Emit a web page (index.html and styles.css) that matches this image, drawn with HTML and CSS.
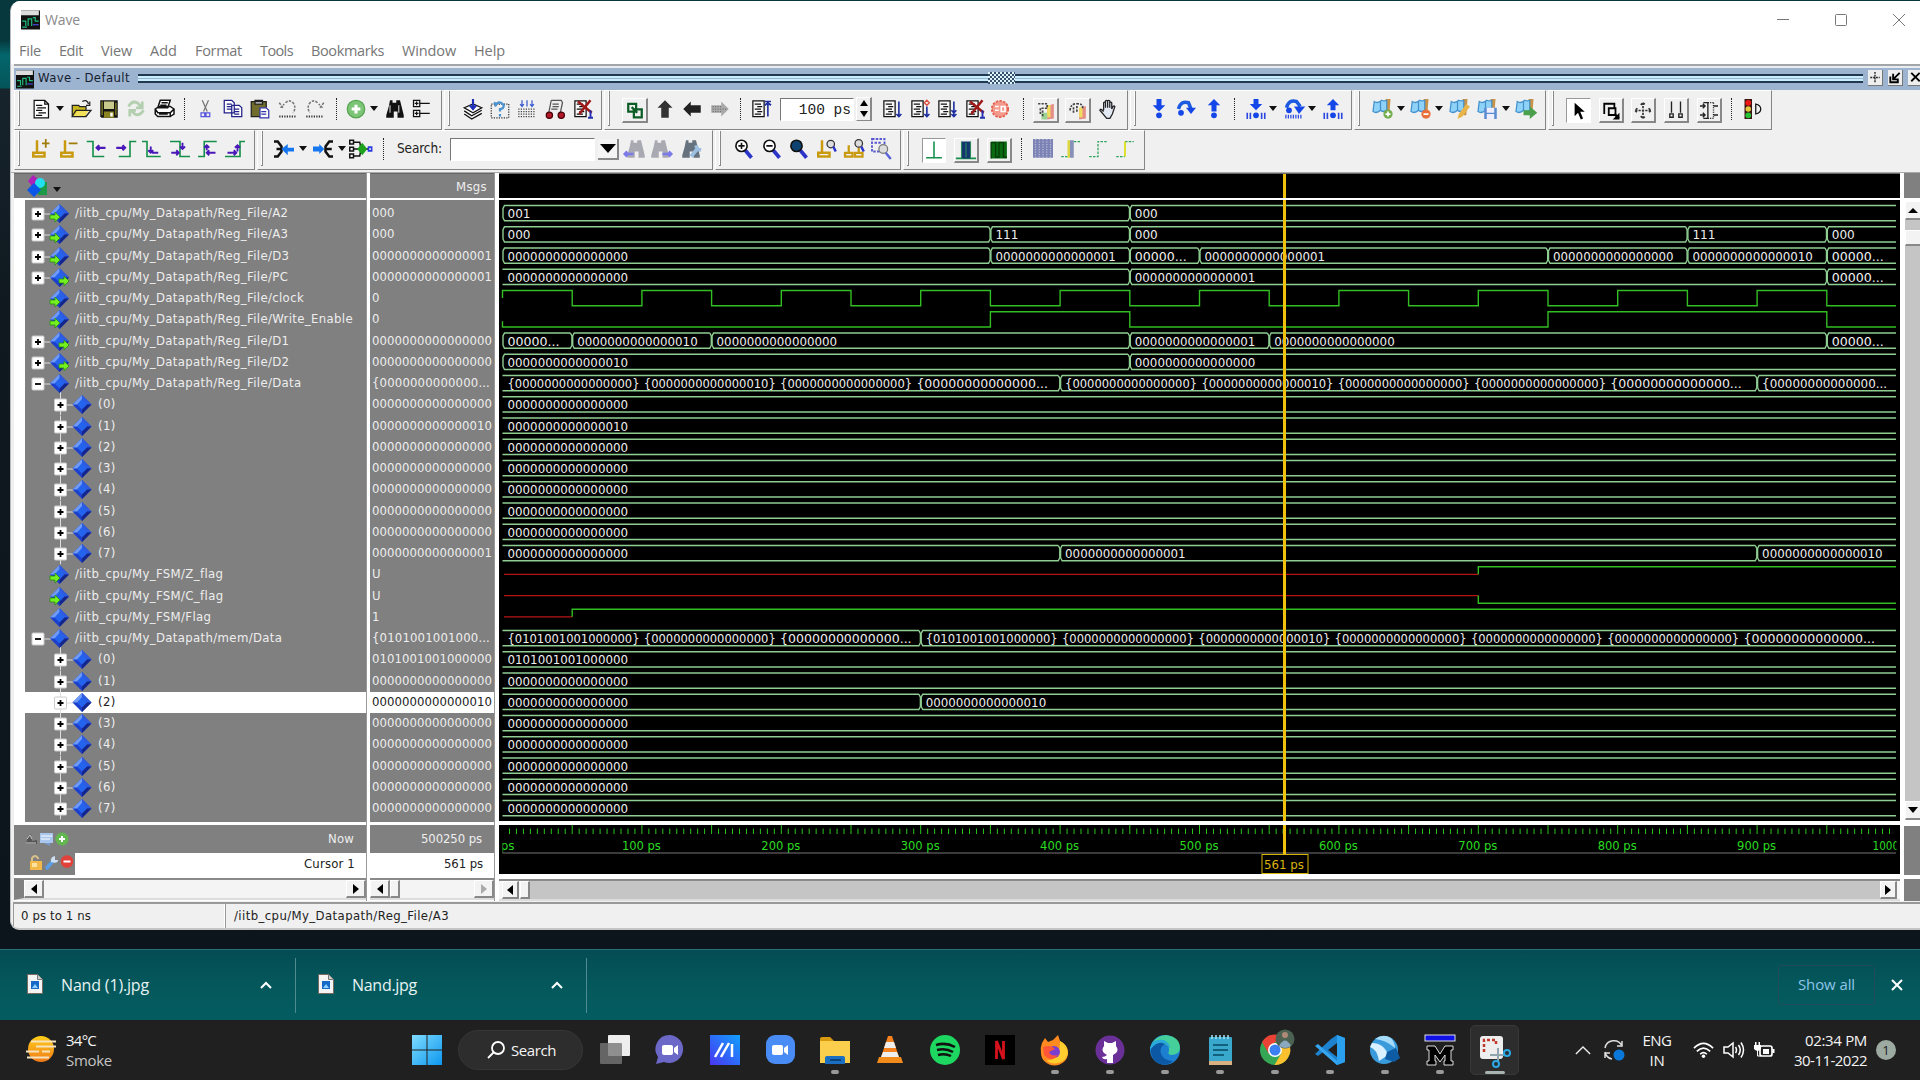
FILE: index.html
```html
<!DOCTYPE html>
<html lang="en">
<head>
<meta charset="utf-8">
<title>Wave</title>
<link rel="stylesheet" href="styles.css">
</head>
<body>
<div class="desktop">
  <section class="window">
    <header class="titlebar">
      <svg class="app-icon" viewBox="0 0 16 16"><rect width="16" height="16" fill="#111"/><rect width="15" height="4" fill="#ddd"/><path d="M1 9h3v4M6 13V7h3v6M10 6h2v3h3M1 14h4" stroke="#1fbf7f" fill="none"/><path d="M10 12h5" stroke="#55f"/></svg>
      <span class="win-title" data-w="35">Wave</span>
      <div class="win-buttons">
        <svg viewBox="0 0 14 14"><path d="M1 6.5h12"/></svg>
        <svg viewBox="0 0 14 14"><rect x="1.5" y="1.5" width="11" height="11" rx="1"/></svg>
        <svg viewBox="0 0 14 14"><path d="M1 1l12 12M13 1L1 13"/></svg>
      </div>
    </header>
    <nav class="menubar">
      <span data-w="22">File</span><span data-w="24">Edit</span><span data-w="31">View</span><span data-w="27">Add</span><span data-w="47">Format</span><span data-w="33">Tools</span><span data-w="73">Bookmarks</span><span data-w="54">Window</span><span data-w="31">Help</span>
    </nav>
    <div class="dockbar">
      <svg class="dock-icon" viewBox="0 0 16 16"><rect width="16" height="16" fill="#111"/><rect width="15" height="4" fill="#ddd"/><path d="M1 9h3v4M6 13V7h3v6M10 6h2v3h3M1 14h4" stroke="#1fbf7f" fill="none"/><path d="M10 12h5" stroke="#55f"/></svg>
      <span class="dock-title" data-w="92">Wave - Default</span>
      <div class="dock-lines"></div><div class="dock-dots"></div><div class="dock-lines"></div>
      <div class="dock-buttons">
        <svg viewBox="0 0 14 16"><path d="M7 2v12M2 8h10" stroke="#222" stroke-width="1.5" stroke-dasharray="2 1"/></svg>
        <svg viewBox="0 0 14 16"><path d="M12 3L6 9M5 4v6h6M2 7v6h8v-3" stroke="#000" stroke-width="2" fill="none"/></svg>
        <svg viewBox="0 0 14 16"><path d="M3 3l9 9M12 3l-9 9" stroke="#000" stroke-width="2"/></svg>
      </div>
    </div>
    <div class="toolbars">
      <div class="tool-row" id="row1"></div>
      <div class="tool-row" id="row2"></div>
    </div>
    <main class="panes">
      <div class="name-pane">
        <div class="pane-head names-head">
          <svg width="22" height="24" viewBox="0 0 22 24"><path d="M7 1l7 6-7 6-5-6z" fill="#b01fb8"/><path d="M12 8h9v13h-9z" fill="#1d9a45"/><circle cx="14" cy="9" r="5" fill="#22e0f0"/><path d="M8 9l7 7-7 7-7-7z" fill="#0b55e8"/></svg>
          <i class="caret"></i>
        </div>
        <div class="names" id="names"></div>
        <div class="foot-now">
          <svg width="44" height="16" viewBox="0 0 44 16"><path d="M1 13l2-8 3-2 1 7 5-1v4z" fill="#555"/><path d="M2 8l3-4 2 4M1 12h10" stroke="#ccc" fill="none"/><rect x="15" y="2" width="13" height="10" fill="#a9c6ee"/><path d="M16 5h11M16 8h9" stroke="#fff"/><path d="M19 12h6v3z" fill="#7799cc"/><circle cx="37" cy="8" r="6.5" fill="#62b84e"/><path d="M37 5v6M34 8h6" stroke="#fff" stroke-width="2"/></svg>
          <span data-w="26">Now</span>
        </div>
        <div class="foot-cursor">
          <div class="lock-box"><svg width="46" height="18" viewBox="0 0 46 18"><path d="M5 8V4q3-4 6 0v1" stroke="#d8c08a" stroke-width="2" fill="none"/><rect x="3" y="7" width="12" height="9" fill="#f2b94a"/><path d="M5 9h5v4H5z" fill="#fbe3a0"/><path d="M19 15l7-8" stroke="#5a9ee6" stroke-width="3.500"/><path d="M24 8q-1-5 4-6l0 4 3 0q0 4-7 2z" fill="#cfe0f4"/><circle cx="40" cy="7.500" r="6.300" fill="#e2403a"/><path d="M36.500 7.500h7" stroke="#fff" stroke-width="2"/></svg></div>
          <span data-w="51">Cursor 1</span>
        </div>
        <div class="hscroll hs-names"><b class="btn lf"></b><i></i><b class="btn rt"></b></div>
      </div>
      <div class="value-pane">
        <div class="pane-head value-head"><span data-w="31">Msgs</span></div>
        <div class="values" id="values"></div>
        <div class="foot-now"><span data-w="61">500250 ps</span></div>
        <div class="foot-cursor"><span data-w="39">561 ps</span></div>
        <div class="hscroll"><b class="btn lf"></b><b class="btn thumb"></b><i></i><b class="btn rt off"></b></div>
      </div>
      <div class="wave-pane">
        <div class="pane-head wave-head"></div>
        <svg class="waves" id="waves" width="1401" height="621" viewBox="499 200 1401 621"></svg>
        <svg class="timeline" id="timeline" width="1401" height="49" viewBox="499 825 1401 49"></svg>
        <div class="hscroll hs-wave"><b class="btn lf"></b><b class="btn thumb"></b><i></i><b class="btn rt"></b></div>
        <div class="cursor-line"></div>
      </div>
      <div class="side-pane">
        <div class="side-top"></div>
        <div class="vscroll"><b class="btn up"></b><i></i><b class="btn vthumb"></b><em></em><b class="btn dn"></b></div>
        <div class="side-mid"></div>
        <div class="side-low"></div>
      </div>
    </main>
    <footer class="statusbar">
      <div class="status-time"><span data-w="70">0 ps to 1 ns</span></div>
      <div class="status-path"><span data-w="215">/iitb_cpu/My_Datapath/Reg_File/A3</span></div>
    </footer>
  </section>
</div>
<section class="shelf">
  <div class="download"><svg class="file" viewBox="0 0 16 20"><path d="M.5.500h10l5 5v14H.5z" fill="#f4f4f4" stroke="#7a6a60"/><path d="M10.500.500v5h5" fill="#ccc" stroke="#777"/><rect x="4" y="7" width="8" height="8" fill="#1769c8"/><path d="M5 14l3-4 3 4" fill="#8fd1ff"/></svg><span data-w="88">Nand (1).jpg</span><svg class="chev" viewBox="0 0 12 8"><path d="M1 7l5-5 5 5"/></svg></div>
  <div class="download"><svg class="file" viewBox="0 0 16 20"><path d="M.5.500h10l5 5v14H.5z" fill="#f4f4f4" stroke="#7a6a60"/><path d="M10.500.500v5h5" fill="#ccc" stroke="#777"/><rect x="4" y="7" width="8" height="8" fill="#1769c8"/><path d="M5 14l3-4 3 4" fill="#8fd1ff"/></svg><span data-w="65">Nand.jpg</span><svg class="chev" viewBox="0 0 12 8"><path d="M1 7l5-5 5 5"/></svg></div>
  <div class="show-all"><span data-w="57">Show all</span></div>
  <svg class="shelf-x" viewBox="0 0 12 12"><path d="M1 1l10 10M11 1L1 11"/></svg>
</section>
<section class="taskbar">
  <div class="weather">
    <svg width="30" height="28" viewBox="0 0 30 28"><defs><linearGradient id="sun" x2="0" y2="1"><stop stop-color="#ffcf1a"/><stop offset="1" stop-color="#f07a18"/></linearGradient></defs><circle cx="15" cy="13" r="13" fill="url(#sun)"/><path d="M5 5.500h25M10 10.500h20M0 15.500h13M16 15.500h8M1 21.500h22" stroke="#f6e2bd" stroke-width="2"/></svg>
    <div><span data-w="30">34°C</span><span class="dim" data-w="46">Smoke</span></div>
  </div>
  <div class="apps" id="apps"></div>
  <div class="tray">
    <svg class="tray-chev" viewBox="0 0 18 10"><path d="M1 9l8-8 8 8"/></svg>
    <svg class="sync" viewBox="0 0 22 22"><path d="M2 9a9 9 0 0 1 17-2M19 2v5h-5M9 20a9 9 0 0 1-7-7M2 19v-5h5" fill="none" stroke="#ddd" stroke-width="1.500"/><circle cx="16" cy="16" r="5.500" fill="#0a78d8"/></svg>
    <div class="lang"><span data-w="29">ENG</span><span data-w="15">IN</span></div>
    <svg class="wifi" viewBox="0 0 22 18"><path d="M1 7q10-10 20 0M4 10.500q7-7 14 0M7.500 13.500q3.500-3.500 7 0" fill="none" stroke="#fff" stroke-width="1.700"/><circle cx="11" cy="15.500" r="1.800" fill="#fff"/></svg>
    <svg class="vol" viewBox="0 0 22 18"><path d="M1 6h4l5-4v14l-5-4H1z" fill="none" stroke="#fff" stroke-width="1.500"/><path d="M12.500 6q2 3 0 6M15.500 4q3.500 5 0 10M18 1.500q5 7.500 0 15" fill="none" stroke="#fff" stroke-width="1.500"/></svg>
    <svg class="batt" viewBox="0 0 22 18"><rect x="7" y="5" width="12" height="10" rx="2" fill="none" stroke="#fff" stroke-width="1.700"/><path d="M19.500 8v4h2V8zM10 8h6v5h-6zM1 4h7v4q-3 4-7 0zM2 1h1.500v3H2zM5.500 1H7v3H5.500z" fill="#fff"/><path d="M4.500 9v6h3" stroke="#fff" fill="none"/></svg>
    <div class="clock"><span data-w="62">02:34 PM</span><span data-w="73">30-11-2022</span></div>
    <div class="badge">1</div>
  </div>
</section>
<script>
// Toolbar icon drawings, each on a 16x16 grid.
const P = (d, c = '#111', w = 1, dash = '') => `<path d="${d}" stroke="${c}" stroke-width="${w}" fill="none"${dash ? ` stroke-dasharray="${dash}"` : ''}/>`;
const F = (d, c) => `<path d="${d}" fill="${c}"/>`;
const doc = F('M1 1h9v13H1z', '#f8f8f8') + P('M1.500 1.500h9v12.500h-9zM3 4h5M5 6h4M3 8h5M5 10h4M3 12h5');
const bin = c => F('M4 1h2v2h3V1h3l1 4 2 8v2h-5v-5H7v5H1v-2l2-7z', c);
const flag = F('M10 0h4l-1 13h-2z', '#c99345') + F('M1 2q3 2 6-1 2 1 4 0v8q-3 2-5 0-3 3-6 1z', '#8fd2f8') + P('M1 2q3 2 6-1 2 1 4 0v8q-3 2-5 0-3 3-6 1zM6 2v7', '#4290cc');
const lens = (f = '#fff') => P('M9 9l5 6', '#2b35c8', 3) + `<circle cx="6" cy="5.500" r="4.500" fill="${f}" stroke="#111" stroke-width="1.300"/>`;
const cur = P('M4 1v9M1 11h9v3H1zM4 11V1', '#c99a10', 2);
const I = {
  newdoc: F('M2 1h9l3 3v11H2z', '#fff') + P('M2.500 1h8.500l3 3v11H2.500zM11 1v3h3M4 5h5M5 7h7M4 9h5M6 11h6M4 13h5'),
  open: F('M1 5h5l1 1h5v8H1z', '#c8b820') + P('M1 14V5h5l1 1h5v3M1 14l3-5h12l-4 5zM9 2q4-2 5 2M15 2v3h-3', '#222') + F('M2 13.500l3-4h9l-3 4z', '#f3e05a'),
  save: F('M1 1h14v14H2l-1-1z', '#141414') + F('M4 2h8v6H4z', '#c9c98c') + F('M2 2h1v11H2zM13 3h1v10h-1zM4 10h8v5H4z', '#8a8421') + F('M9 11h2v3H9z', '#fff'),
  refresh: P('M2 6q3-5 7-3l3 3M13 2v5H8M14 9q-3 5-7 3l-3-3M3 14V9h5', '#b3cfaf', 2.2),
  print: F('M5 1h8l-2 6H3zM1 8l3-2h9l3 3v4l-3 2H3l-2-3z', '#fff') + P('M5 1h8l-2 6H3zM6 3h5M5 5h5M1 8l3-2h9l3 2-3 3H3zM1 8v4l2 2h10V11M13 14l3-2V8M4 12h7', '#111', 1.2),
  cut: P('M5 1l4 9M10 1L6 10', '#777') + P('M4 11h3v3H4zM8 11h3v3H8z', '#5555dd'),
  copy: F('M1 1h8v10H1zM7 5h8v9H7z', '#fff') + P('M1 1h6l2 2v8H1zM3 4h4M3 6h4M3 8h4M7 5h6l2 2v7H7zM9 8h4M9 10h4M9 12h4', '#22228a'),
  paste: F('M1 2h12v12H1z', '#6f6c2c') + F('M4 1h6v3H4z', '#ddd') + P('M1 2h12v12H1zM4 1h6v3H4z', '#222') + F('M8 7h7v8H8z', '#fff') + P('M8 7h5l2 2v6H8zM9 10h4M9 12h4', '#3434aa'),
  undo: P('M1 3l3 4M2 7l3-3M6 3q3-3 6 0 3 4 0 8', '#777', 1.2, '2 1') + P('M1 14h13', '#333', 1.5, '1 1'),
  redo: P('M15 3l-3 4M14 7l-3-3M10 3q-3-3-6 0-3 4 0 8', '#777', 1.2, '2 1') + P('M1 14h13', '#333', 1.5, '1 1'),
  plus: '<circle cx="8" cy="8" r="7" fill="#7cc576" stroke="#58a552"/>' + P('M8 4.500v7M4.500 8h7', '#fff', 2.5),
  bin: bin('#111') + P('M4 5v6M11 5v6', '#bbb'),
  tree: P('M2 1h5v5H2zM3 3.500h3M4.500 2v3M7 3.500h8M2 9h5v5H2zM3 11.500h3M7 11.500h8M4.500 10v3'),
  layers: F('M1 9l7-4 7 3-7 5z', '#fff') + P('M1 7l7-3 7 3-7 4zM1 9.500l6 4 8-4.500M1 12l6 4 8-4.500') + P('M8 0v7M5.500 5L8 8l2.500-3', '#1f2fb8', 1.7),
  help: P('M1 4h14v11H1z', '#333', 1, '1 1') + P('M3 3l3 1M4 6q3-6 7-1 0 3-3 3v2M8 12v2', '#4a93d0', 1.8),
  sim: P('M1 8h14M1 10h14M1 12h14M1 14h14', '#444', 1, '1 1') + P('M4 1v5M8 1v5M12 1v5M2.500 4L4 6l1.500-2M10.500 4L12 6l1.500-2', '#3a5bd0'),
  gear: F('M5 1h9l-2 11H3z', '#eee') + P('M5 1h8l1 2-2 9M5 1L3 11M6 4h5M6 6h5M5 8h5', '#555') + '<circle cx="3.500" cy="13" r="2.500" fill="#b4162a" stroke="#400"/><circle cx="13" cy="13" r="2.500" fill="#b4162a" stroke="#400"/>',
  del: doc + P('M4 2l11 9M14 1L5 12', '#a01818', 2) + P('M14 9v6M12 15h4', '#2030b0', 1.5),
  chain: P('M2 2h7v7H2zM7 7h7v7H7zM5 5l5 5', '#0d5c25', 2),
  up: F('M8 1l6 6h-3v8H5V7H2z', '#333'),
  left: F('M1 8l6-6v3h8v6H7v3z', '#222'),
  right: F('M15 8L9 2v3H1v6h8v3z', '#aaa') + P('M2 6h8M2 8h11M2 10h8', '#777', 1, '1 1'),
  run0: doc + P('M13.500 14V2M11 5l2.500-2L16 5M11 2h5', '#1d2fa0', 1.3),
  run1: doc + P('M13.500 2v12M11.500 12l2 2 2-2', '#1d2fa0', 1.3),
  run2: doc + P('M13.500 6v8M11.500 12l2 2 2-2', '#1d2fa0', 1.3) + P('M13.500 1l2 2-2 2-2-2z', '#e04a3c'),
  run3: doc + P('M13.500 2v12M11.500 9l2 2 2-2M11.500 12l2 2 2-2', '#1d2fa0', 1.3),
  stop: '<circle cx="8" cy="8" r="6.500" fill="#f29a8c" stroke="#e66050" stroke-width="1.500" stroke-dasharray="2 1"/>' + P('M4 6h3M4 9h3M9 6h3v4H9z', '#fff', 1.3),
  prof1: F('M9 4l6-2v13l-6 1z', '#e58f88') + F('M9 3h3v11H9z', '#f0dc60') + F('M4 10h5v6H4z', '#9bd396') + P('M1 2h8v4H3v6M5 8v6', '#444', 1.5, '2 1'),
  prof2: F('M9 6l6-2v11l-6 1z', '#e58f88') + F('M9 5h3v9H9z', '#f0dc60') + P('M1 8q0-6 6-6t5 4M4 5v6M7 4v6', '#444', 1.5, '2 1'),
  hand: F('M4 8V3q1-1 2 0V1q1-1 2 0v1q1-1 2 0v2q1-1 2 0v6l-1 6H6L1 8q1-1 3 0z', '#e3e9f2') + P('M4.500 9V3q.8-1 1.500 0v4V1.500q1-1 1.700 0V7 1.500q1-1 1.700 0V7 3q1-1 1.600 0v5l1-2q1-1 1.500 0l-2 6-2 3.500H7L1.500 9q.5-2 3 1', '#222'),
  into: F('M6 0h4v5h3L8 10 3 5h3z', '#1446e8') + '<circle cx="8" cy="13" r="2.300" fill="#1446e8"/>',
  over: P('M2 8q2-7 8-5l2 5', '#1c5be0', 2.8) + F('M8 7h8l-4 5z', '#1446e8') + '<circle cx="4" cy="11" r="2.300" fill="#1446e8"/>',
  out: F('M6 10h4V5h3L8 0 3 5h3z', '#1446e8') + '<circle cx="8" cy="13" r="2.300" fill="#1446e8"/>',
  arrow: F('M5 1v12l3-3 2.500 6 2-1L10 9h4z', '#000'),
  zoomsel: P('M2 11V2h9v3M6 6h6v6H6z', '#000', 1.6) + P('M11 11l4 4', '#000', 2) + F('M15.500 10v6h-6z', '#000'),
  pan: P('M8 1v14M1 8h14M6 3l2-2 2 2M6 13l2 2 2-2M3 6L1 8l2 2M13 6l2 2-2 2', '#333', 1.5, '2 1'),
  two: P('M4 0v10M12 0v10M2.500 11h3v3h-3zM10.500 11h3v3h-3z', '#222', 1.2),
  edit: P('M0 4h4M0 12h4M2.500 2l2 2-2 2M2.500 10l2 2-2 2M3 1h4v14H3M12 4h4M12 12h4', '#222', 1.2) + P('M12 1v14M7 1h5M7 15h5', '#222', 1.2, '1 1'),
  light: F('M2 0h6v16H2z', '#3a1512') + '<circle cx="5" cy="3" r="2.300" fill="#f01616"/><circle cx="5" cy="8" r="2.200" fill="#e5c93c"/><circle cx="5" cy="13" r="2.300" fill="#25c437"/>' + P('M11 4q4 1 4 4t-4 4z'),
  cadd: cur + P('M8 3.500h6M11 0v7', '#a07c08', 1.4),
  cdel: cur + P('M7 3.500h7', '#a07c08', 1.4),
  e1: P('M-1 2h5v12h9', '#15904a', 1.3) + P('M14 7H7M9 5L7 7l2 2', '#4a18b8', 1.8),
  e2: P('M17 2h-5v12H3', '#15904a', 1.3) + P('M1 7h7M6 5l2 2-2 2', '#4a18b8', 1.8),
  e3: P('M0 2h4v12h11', '#15904a', 1.3) + P('M7 6v4M5 9l2 2 2-2M13 11H8', '#4a18b8', 1.5),
  e4: P('M0 2h8v12h8', '#15904a', 1.3) + P('M10 3v5M8 6l2 2 2-2M1 11h6M5 9l2 2-2 2', '#4a18b8', 1.5),
  e5: P('M0 14h5V2h10', '#15904a', 1.3) + P('M7 9V5M5 7l2-2 2 2M14 11H7M9 9l-2 2 2 2', '#4a18b8', 1.5),
  e6: P('M0 14h12V2h4', '#15904a', 1.3) + P('M10 10V5M8 7l2-2 2 2M2 11h7M7 9l2 2-2 2', '#4a18b8', 1.5),
  m1: P('M0 2h3l3 4v4l-3 4H0M2 8h4', '#111', 2) + F('M6 8l5-4v3h5v3h-5v3z', '#1676f0'),
  m2: P('M16 2h-3l-3 4v4l3 4h3M10 8h5', '#111', 2) + F('M9 8L5 4v2H0v4h5v2z', '#1676f0'),
  m3: P('M-1 1h3v3h-3zM-1 6.500h3v3h-3zM-1 12h3v3h-3zM2 2.500h5L8 8l-1 5.500H2M2 8h12', '#111', 1.2) + F('M9 3l4 5-4 5-4-5z', '#1ea21e') + P('M14 6.500h2.500v3H14z', '#2a3be0', 1.3),
  b1: bin('#a9a9b2') + P('M6 12H-1M1 10l-2 2 2 2', '#7a7ae8', 2),
  b2: bin('#a9a9b2') + P('M10 12h7M15 10l2 2-2 2', '#7a7ae8', 2),
  b3: bin('#66727d') + P('M8 14l5-6M12 5l1 3 3 1', '#9dbfe0', 3),
  zin: lens() + P('M3.500 5.500h5M6 3v5', '#111', 1.3),
  zout: lens() + P('M3.500 5.500h5', '#111', 1.3),
  zfull: lens('#0e4270'),
  zc1: cur + '<circle cx="11" cy="4" r="3" fill="#ddd" stroke="#333"/>' + P('M13 6l2 4', '#2b35c8', 2),
  zc2: P('M3 5v6M0 11h6v3H0zM11 7v4M8 11h6v3H8z', '#c99a10', 1.8) + '<circle cx="11" cy="3.500" r="3" fill="#ddd" stroke="#333"/>' + P('M13 6l2 4', '#2b35c8', 2),
  zr: P('M0 0h10v10H0zM2 3h6', '#5a5ad0', 1.5, '2 1') + '<circle cx="9" cy="8" r="3.500" fill="#ddd" stroke="#777"/>' + P('M11 11l4 5', '#5b65d8', 2),
  w1: P('M1 14.500h14M8 0v14', '#15904a', 1.4),
  w2: P('M-1 15h18', '#15904a', 1.4) + F('M4 0h8v15H4z', '#14366e') + P('M8 1v13M4 0v15M12 0v15', '#2c8a5c'),
  w3: F('M1 0h14v15H1z', '#0a6a10') + P('M1 15V1h4v13h3V1h4v13h3', '#053c08', 1.2),
  w4: F('M0 0h16v15H0z', '#7c83b4') + P('M2 0v15M5 0v15M8 0v15M11 0v15M14 0v15', '#b7bcd8', 1, '1 1'),
  w5: P('M1 14h5M11 2h5', '#2aa35a', 1, '2 1') + F('M6 1h2v14H6z', '#dbd640') + F('M8 1h3v14H8z', '#8790b8'),
  w6: P('M1 14h7V2h7', '#2aa35a', 1, '2 1'),
  w7: P('M1 14h7M8 2h7', '#2aa35a', 1, '2 1') + P('M8 2v12', '#dde020', 1.5)
};
const bars = P('M1 11v5M3.500 11v5M12.500 11v5M15 11v5', '#2a48e0', 1.3);
I.into2 = F('M6 0h4v4h3L8 9 3 4h3z', '#1446e8') + '<circle cx="8" cy="13" r="2.300" fill="#1446e8"/>' + bars;
I.out2 = F('M6 9h4V5h3L8 0 3 5h3z', '#1446e8') + '<circle cx="8" cy="13" r="2.300" fill="#1446e8"/>' + bars;
I.over2 = P('M2 7q2-7 8-5l3 4', '#1c5be0', 2.8) + F('M8 6h9l-5 6z', '#1446e8') + '<circle cx="4" cy="9" r="2.300" fill="#1446e8"/>' + P('M1 14h14', '#2a48e0', 3, '1 1');
I.fadd = flag + '<circle cx="12" cy="12" r="3.700" fill="#74ad4d"/>' + P('M12 10v4M10 12h4', '#fff', 1.4);
I.fdel = flag + '<circle cx="12" cy="12" r="3.700" fill="#e8703a"/>' + P('M10 12h4', '#fff', 1.4);
I.fedit = flag + F('M13 4l3 2-6 8-4 2 1-4z', '#e8b54a');
I.fsave = flag + F('M5 7h10v9H5z', '#5b8bd0') + F('M7 7h6v4H7zM7 12h6v4H7z', '#eef');
I.fgo = flag + F('M6 9h5V6l6 5-6 5v-3H6z', '#4aa04c');

// Each group: [left edge, right edge, items]; an item is [kind, centre x, width, flag].
const R1 = [
  [14, 442, [['newdoc', 41], ['^', 60], ['open', 81], ['save', 108.5], ['refresh', 136], ['print', 164], ['|', 184.5], ['cut', 206], ['copy', 233], ['paste', 260], ['undo', 288], ['redo', 314.5], ['|', 336], ['plus', 356], ['^', 374], ['bin', 395], ['tree', 421]]],
  [444, 602, [['layers', 473], ['help', 500], ['sim', 527], ['gear', 555], ['del', 583]]],
  [604, 1128, [['chain', 635, 26, 'box'], ['up', 665], ['left', 692], ['right', 719.5], ['|', 740], ['run0', 761], ['field', 817, 74, '100 ps'], ['spin', 864, 16], ['run1', 892], ['run2', 919.5], ['run3', 947], ['del', 974.5], ['stop', 1000], ['|', 1023], ['prof1', 1046, 26, 'box'], ['prof2', 1078, 26, 'box'], ['hand', 1108]]],
  [1130, 1352, [['into', 1159], ['over', 1186], ['out', 1214], ['|', 1234], ['into2', 1255.5], ['^', 1273], ['over2', 1294], ['^', 1311.5], ['out2', 1333]]],
  [1354, 1545.5, [['fadd', 1383], ['^', 1400.5], ['fdel', 1421], ['^', 1439], ['fedit', 1460], ['fsave', 1488], ['^', 1506], ['fgo', 1526]]],
  [1547.5, 1772, [['arrow', 1578, 25, 'on'], ['zoomsel', 1611, 25, 'box'], ['pan', 1643.5, 25, 'box'], ['two', 1676, 25, 'box'], ['edit', 1709, 25, 'box'], ['|', 1731.5], ['light', 1752]]]
];
const R2 = [
  [14, 254.5, [['cadd', 42], ['cdel', 70], ['e1', 98], ['e2', 124.5], ['e3', 152], ['e4', 180], ['e5', 208], ['e6', 235]]],
  [256.5, 713, [['m1', 284], ['^', 303], ['m2', 323], ['^', 342], ['m3', 361], ['|', 383], ['label', 419.5, 45], ['field', 522, 145, ''], ['drop', 608.5, 21], ['b1', 635.5], ['b2', 660], ['b3', 690.5]]],
  [715, 901, [['zin', 744], ['zout', 771.5], ['zfull', 799], ['zc1', 827], ['zc2', 855], ['zr', 882]]],
  [903, 1145, [['w1', 933.5, 24, 'on'], ['w2', 966, 25, 'box'], ['w3', 999, 25, 'box'], ['|', 1021.5], ['w4', 1042.5], ['w5', 1070], ['w6', 1098], ['w7', 1125]]]
];
function build(id, groups) {
  document.getElementById(id).innerHTML = groups.map(([l, r, items]) => {
    let x = l + 6, html = '';
    for (const [k, c, w0, o] of items) {
      const w = w0 || (k === '|' ? 1 : k === '^' ? 8 : 20);
      const st = `style="width:${w}px;margin-left:${(c - w / 2 - x).toFixed(1)}px"`;
      x = c + w / 2;
      if (k === '|') html += `<div class="dots" ${st}></div>`;
      else if (k === '^') html += `<i class="caret" ${st}></i>`;
      else if (k === 'field') html += `<div class="field" ${st}>${o}</div>`;
      else if (k === 'spin') html += `<div class="spin" ${st}><i></i><i></i></div>`;
      else if (k === 'drop') html += `<div class="drop" ${st}><i></i></div>`;
      else if (k === 'label') html += `<div class="label" ${st}><span data-w="45">Search:</span></div>`;
      else html += `<div class="tool ${o ? 'box ' + o : ''}" ${st}><svg viewBox="0 0 16 16">${I[k]}</svg></div>`;
    }
    return `<div class="group" style="width:${r - l}px"><div class="grip"></div>${html}</div>`;
  }).join('');
}
build('row1', R1);
build('row2', R2);

// Signals: name, icon kind, value, trace.
const Z = '0000000000000000', ONE = '0000000000000001', TWO = '0000000000000010', E = '00000...';
const B = s => `{${s}}`, CUT = '{00000000000000...', rf = '/iitb_cpu/My_Datapath/Reg_File/';
const M0 = '0101001001000000';
const S = [
  [rf + 'A2', '+in', '000', [[0, '001'], [450, '000']], 1],
  [rf + 'A3', '+in', '000', [[0, '000'], [350, '111'], [450, '000'], [850, '111'], [950, '000']], 1],
  [rf + 'D3', '+in', ONE, [[0, Z], [350, ONE], [450, E], [500, ONE], [750, Z], [850, TWO], [950, E]], 1],
  [rf + 'PC', '+out', ONE, [[0, Z], [450, ONE], [950, E]]],
  [rf + 'clock', 'in', '0', 'clock'],
  [rf + 'Write_Enable', 'in', '0', 'we'],
  [rf + 'D1', '+out', Z, [[0, E], [50, TWO], [150, Z], [450, ONE], [550, Z], [950, E]], 1],
  [rf + 'D2', '+out', Z, [[0, TWO], [450, Z]], 1],
  [rf + 'Data', '-', '{0000000000000...', [[0, [B(Z), B(TWO), B(Z), CUT]], [400, [B(Z), B(TWO), B(Z), B(Z), CUT]], [900, [CUT]]]]
];
for (let i = 0; i < 8; i++) S.push([`(${i})`, 'c', i === 1 ? TWO : i === 7 ? ONE : Z, i === 7 ? [[0, Z], [400, ONE], [900, TWO]] : [[0, i === 1 ? TWO : Z]]]);
S.push(['/iitb_cpu/My_FSM/Z_flag', 'in', 'U', 'z'], ['/iitb_cpu/My_FSM/C_flag', 'in', 'U', 'c'], ['/iitb_cpu/My_FSM/Flag', '', '1', 'f'],
  ['/iitb_cpu/My_Datapath/mem/Data', '-', '{0101001001000...', [[0, [B(M0), B(Z), CUT]], [300, [B(M0), B(Z), B(TWO), B(Z), B(Z), B(Z), CUT]]]]);
for (let i = 0; i < 8; i++) S.push([`(${i})`, 'c', i === 0 ? M0 : i === 2 ? TWO : Z, i === 2 ? [[0, Z], [300, TWO]] : [[0, i === 0 ? M0 : Z]], 0, i === 2]);

const X = t => 502.5 + 1.394 * t;
const diamond = c => `<path d="M${c} 1l9.500 9.500-9.500 9.500-9.500-9.500z" fill="#1c40cc"/><path d="M${c} 1l9.500 9.500H${c}z" fill="#2d5ce0"/><path d="M${c} 1v9.500h-9.500z" fill="#6f9bf6"/><path d="M${c} 20v-9.500h9.500z" fill="#14268c"/><path d="M${c} 5l5 5.500-5 5-5-5z" fill="#2463ee"/>`;
const box = (x, m) => `<rect x="${x}" y="5" width="12" height="12" rx="1" fill="#fff" stroke="#ccc"/><path d="M${x + 3} 11h6${m ? '' : 'M' + (x + 6) + ' 8v6'}" stroke="#000" stroke-width="1.800"/>`;
const arrow = x => `<path d="M${x} 12h5V9l5 5-5 5v-3h-5z" fill="#74f020" stroke="#2a8a10" stroke-width=".8"/>`;
const len = s => s.length === 16 ? 120.5 : s.length === 3 ? 23 : s.length === 8 ? 52 : s.endsWith('}') ? 132 : 132.5;
let names = '', values = '', waves = '';
S.forEach(([n, k, v, tr, cap, sel], r) => {
  const child = k === 'c';
  let ic = '';
  if (child) ic = '<path d="M35.500 0v21.300M40 11h10" stroke="#ddd"/>' + box(29.5) + diamond(57);
  else {
    if (k[0] === '-') ic += '<path d="M35.500 18v4" stroke="#ddd"/>';
    if (k[0] === '+' || k[0] === '-') ic += '<path d="M18 11h8" stroke="#ddd"/>' + box(7, k[0] === '-');
    ic += diamond(34.5);
    if (k.endsWith('in')) ic += arrow(25);
    if (k.endsWith('out')) ic += arrow(34);
  }
  names += `<div class="nrow ${child ? 'child' : ''} ${sel ? 'sel' : ''}"><svg>${ic}</svg><span>${n}</span></div>`;
  values += `<div class="vrow ${sel ? 'sel' : ''}"><span ${v.length > 15 ? `data-w="${v[0] === '{' ? 118 : 120}"` : ''}>${v}</span></div>`;
  const t = 205.5 + r * 21.25, b = t + 15.2, m = (t + b) / 2;
  const path = (c, d) => waves += `<path class="${c}" d="${d}"/>`;
  if (Array.isArray(tr)) tr.forEach(([s, txt], i) => {
    const x = X(s), last = i === tr.length - 1, e = last ? 1896 : X(tr[i + 1][0]) - 1.8;
    const st = i || cap;
    path('bus', `M${e} ${t}H${st ? x + 2 : x}` + (st ? `l-1.500 3V${b - 3}l1.500 3` : `M${x} ${b}`) + `H${e}` + (last ? '' : `l1.500-3V${t + 3}l-1.500-3`));
    // Array elements repeat at a fixed pitch inside their segment.
    [].concat(txt).forEach((s2, j) => {
      const w = s2 === CUT ? (j ? 131.5 : 125) : len(s2);
      waves += `<text x="${x + 5 + j * 136.3}" y="${t + 12.6}" textLength="${w}" lengthAdjust="spacingAndGlyphs">${s2}</text>`;
    });
  });
  else if (tr === 'clock') {
    let d = `M${X(0)} ${m}V${t}`;
    for (let i = 1; i < 20; i++) d += `H${X(i * 50)}V${i % 2 ? b : t}`;
    path('sig', d + 'H1896');
  }
  else if (tr === 'we') path('sig', `M${X(0)} ${m + 2}V${b}H${X(350)}V${t}H${X(450)}V${b}H${X(750)}V${t}H${X(950)}V${b}H1896`);
  else if (tr === 'f') { path('unk', `M504 ${m}H${X(50)}`); path('sig', `M${X(50)} ${m}V${t}H1896`); }
  else { path('unk', `M504 ${m}H${X(700)}`); path('sig', `M${X(700)} ${m}V${tr === 'z' ? t : b}H1896`); }
});
document.getElementById('names').innerHTML = names;
document.getElementById('values').innerHTML = values;
document.getElementById('waves').innerHTML = waves;

// Time ruler: a minor tick every 5 ps, a major one every 50 ps.
let ticks = '', tl = '';
for (let t = 5; t < 1000; t += 5) ticks += `M${X(t)} ${t % 50 ? 828.5 : 825}V834`;
for (let t = 0; t <= 1000; t += 100) {
  const w = t === 0 ? 25 : t === 1000 ? 42 : 39;
  tl += `<text x="${t === 1000 ? 1872.5 : X(t) - w / 2 - .5}" y="849.500" textLength="${w}" lengthAdjust="spacingAndGlyphs">${t} ps</text>`;
}
document.getElementById('timeline').innerHTML = `<clipPath id="rule"><rect x="502.500" y="825" width="1394" height="49"/></clipPath><g clip-path="url(#rule)"><path d="${ticks}" stroke="#2bc41f"/>${tl}<path d="M502 853H1896" stroke="#777"/></g><rect x="1262" y="854.500" width="46" height="19" fill="#000" stroke="#d9b40c"/><text class="mark" x="1264" y="869" textLength="40" lengthAdjust="spacingAndGlyphs">561 ps</text>`;

// Taskbar applications.
const cam = '<rect x="7" y="10" width="11" height="10" rx="2" fill="#fff"/><path d="M19 13l4-3v10l-4-3z" fill="#fff"/>';
const A = [
  ['', '<rect x="8" y="0" width="22" height="21" rx="1" fill="#eee"/><rect x="0" y="8" width="22" height="21" rx="1" fill="#777" opacity=".8"/>'],
  ['', '<path d="M15 0a14 14 0 1 1-6 27l-8 2 2-7A14 14 0 0 1 15 0z" fill="#6b68c8"/>' + cam],
  ['', '<defs><linearGradient id="my" x1="0" y1="1" x2="1" y2="0"><stop stop-color="#4a35f0"/><stop offset="1" stop-color="#10a0ff"/></linearGradient></defs><rect width="30" height="30" fill="url(#my)"/><path d="M5 22l8-14M11 22l8-14M22 22V9" stroke="#fff" stroke-width="2.500" fill="none"/>'],
  ['', '<rect width="29" height="29" x="1" rx="9" fill="#4a8cf5"/>' + cam],
  ['run', '<path d="M0 4q0-2 2-2h8l4 4H0z" fill="#d99a10"/><path d="M0 6h30v22H0z" fill="#fbcf4c"/><path d="M5 29v-6q0-2 2-2h16q2 0 2 2v6z" fill="#1c6fc0"/><path d="M10 25h11" stroke="#0b447c" stroke-width="2"/>'],
  ['', '<path d="M13 1h4l8 24H5z" fill="#f5821e"/><path d="M11 7h8l2 6H9zM8 17h14l2 5H6z" fill="#eee"/><path d="M4 22h22l2 6H2z" fill="#f28a1c"/>'],
  ['', '<circle cx="15" cy="15" r="15" fill="#1ed760"/><path d="M6 10q10-3 19 2M7 15q9-2 16 2M8 20q7-2 13 1" stroke="#111" stroke-width="2.500" fill="none"/>'],
  ['', '<rect width="30" height="30" fill="#000"/><path d="M11.500 24V6l7 18V6" stroke="#d5121c" stroke-width="2.800" fill="none"/>'],
  ['run', '<path d="M2 8l3-5 3 4 5-2 5-5 2 6q8 4 8 12a13 12 0 0 1-27 0q-1-5 1-10z" fill="#ff8a1f"/><path d="M20 6q8 4 8 12a13 12 0 0 1-22 7q14 2 14-19z" fill="#ffce2e"/><circle cx="14" cy="17" r="6" fill="#7a3fd0"/><path d="M3 12q8-3 12 2l-6 3q2 5 9 3-6 8-14 0z" fill="#ff5538"/>'],
  ['run', '<circle cx="15" cy="15" r="14.500" fill="#6a3098"/><path d="M9 6l4 2h4l4-2v5q3 4 0 7l-3 2v8h-6v-4q-4 1-5-2 3 0 5-2l-3-2q-3-3 0-7z" fill="#fff"/>'],
  ['run', '<circle cx="15" cy="15" r="15" fill="#1c7fd0"/><path d="M0 14Q3 1 16 0q14 2 14 13 0 7-9 7-4-1-2-4 1-6-5-7Q5 8 0 14z" fill="#45cf9a"/><path d="M0 13Q2 3 14 5q6 3 6 8-5-7-13-4-4 2-7 6z" fill="#2aa9dc"/><path d="M1 14Q8 5 15 9q-6 3-4 10 3 7 12 7-8 7-17 1-6-6-5-13z" fill="#0d58a4"/>'],
  ['run', '<rect x="4" y="2" width="23" height="26" rx="1" fill="#3aa8cc"/><rect x="4" y="26" width="23" height="4" fill="#d9b082"/><path d="M8 10h15M8 15h15M8 20h11" stroke="#10607e" stroke-width="2"/><path d="M7 0v4M11 0v4M15 0v4M19 0v4M23 0v4" stroke="#a6e4f6" stroke-width="1.500"/>'],
  ['run', '<circle cx="15" cy="15" r="15" fill="#35a653"/><path d="M2 7a15 15 0 0 1 26 0H15l-6 12z" fill="#ea4335"/><path d="M28.500 8a15 15 0 0 1-14 22l7-12-4-10z" fill="#fbc02d"/><circle cx="15" cy="15" r="7" fill="#fff"/><circle cx="15" cy="15" r="5.500" fill="#3c7ff0"/><circle cx="25" cy="4" r="9.500" fill="#4b6152"/><circle cx="25" cy="0" r="3" fill="#b08a76"/><path d="M19 11q6-11 12 0-6 4-12 0z" fill="#8aa8c0"/>'],
  ['run', '<path d="M22 0l8 3v24l-8 3L8 17l-5 4-3-2 16-15z" fill="#1d83d0"/><path d="M22 8v14l-9-7z" fill="#202020"/><path d="M0 11l3-2 19 17v4z" fill="#36a4ee"/><path d="M22 0l8 3v24l-8 3z" fill="#2ba0ee"/>'],
  ['run', '<circle cx="14" cy="15" r="14" fill="#3a9bdc"/><path d="M2 8Q14 8 18 20l-9 6Q7 14 0 12z" fill="#d8f0ff"/><path d="M5 4q8-6 16-1 4 5 4 10-9-8-20-9z" fill="#a6dcfa"/><path d="M17 17l9-4 4 10-6 4-9-3z" fill="#0d5ca4"/>'],
  ['run', '<rect x="0" y="0" width="30" height="6" fill="#1010e8" stroke="#ddd"/><path d="M2 11h8l5 8 5-8h8v4h-2v11h2v4h-9v-4h1v-6l-5 7-5-7v6h1v4H2v-4h2V15H2z" fill="#000" stroke="#ddd"/>'],
  ['run active', '<rect x="0" y="0" width="23" height="23" rx="3" fill="#eee"/><path d="M4 16V4h12v4" fill="none" stroke="#c0392b" stroke-width="2.500" stroke-dasharray="3 2"/><path d="M18 12v14M10 19h15" stroke="#90a5ac" stroke-width="2"/><circle cx="16" cy="28" r="3" fill="none" stroke="#29a9e8" stroke-width="2"/><circle cx="27" cy="17" r="3" fill="none" stroke="#29a9e8" stroke-width="2"/>']
];
document.getElementById('apps').innerHTML = '<div class="app"><svg viewBox="0 0 30 30"><defs><linearGradient id="win" gradientUnits="userSpaceOnUse" x2="30" y2="30"><stop stop-color="#7fdcff"/><stop offset="1" stop-color="#0d97ee"/></linearGradient></defs><path d="M0 0h14.500v14.500H0zM15.500 0H30v14.500H15.500zM0 15.500h14.500V30H0zM15.500 15.500H30V30H15.500z" fill="url(#win)"/></svg></div><div class="search"><svg viewBox="0 0 18 18"><circle cx="11" cy="7" r="6" fill="none" stroke="#fff" stroke-width="1.800"/><path d="M6.500 11.500L1 17" stroke="#fff" stroke-width="1.800"/></svg><span data-w="45">Search</span></div>' +
  A.map(([c, s]) => `<div class="app ${c}"><svg viewBox="0 0 30 30">${s}</svg></div>`).join('');

// Tighten or widen the tracking so every label keeps its designed width.
const track = (el, w) => (w - el.getBoundingClientRect().width) / el.textContent.length;
document.querySelectorAll('[data-w]').forEach(el => { el.style.letterSpacing = track(el, +el.dataset.w) + 'px'; });
const widest = document.querySelectorAll('#names span')[5];
document.getElementById('names').style.setProperty('--ls', track(widest, 278) + 'px');
</script>
</body>
</html>
```
FILE: styles.css
```css
* { box-sizing: border-box; }
body { margin: 0; width: 1920px; height: 1080px; overflow: hidden; background: #0f181e; font-family: "Noto Sans", "Open Sans", sans-serif; }
svg { display: block; flex: none; }
span { white-space: nowrap; }
.desktop { height: 949px; padding: 1px 0 0 10px; background: linear-gradient(#06383d 0, #06383d 40px, #04666b 55px, #04555a 88px, #17242c 89px, #101920 300px, #0c151b 100%); }
.window { height: 929px; background: #f0f0f0; border-radius: 10px 0 0 9px; overflow: hidden; display: flex; flex-direction: column; border-left: 1px solid #b8bcbe; border-bottom: 2px solid #c4c4c4; font-family: "DejaVu Sans Condensed", "DejaVu Sans", sans-serif; font-size: 13px; }
.titlebar { height: 34px; background: #fff; display: flex; align-items: center; padding: 3px 14px 0 10px; flex: none; }
.app-icon { width: 19px; height: 20px; }
.win-title { margin-left: 5px; font: 14px "Open Sans", sans-serif; color: #8a8a8a; }
.win-buttons { margin-left: auto; display: flex; gap: 44px; }
.win-buttons svg { width: 14px; height: 14px; stroke: #777; fill: none; }
.menubar { height: 29px; background: #fff; display: flex; align-items: center; gap: 18px; padding: 2px 0 0 8px; flex: none; font: 14.5px "Open Sans", sans-serif; color: #767676; }
.dockbar { height: 26px; border-top: 2px solid #a3a6a9; background: #9cb4d0; display: flex; align-items: center; flex: none; padding-left: 4px; margin-left: 3px; box-shadow: inset 0 2px #e9edf2; }
.dock-icon { width: 18px; height: 19px; margin-top: 2px; margin-left: -2px; }
.dock-title { margin-left: 4px; margin-right: 8px; margin-top: -1px; color: #16202e; }
.dock-lines { flex: 850px 0 1; height: 9px; border-top: 2px solid #22384f; border-bottom: 2px solid #22384f; background: linear-gradient(#c7ecfb 2px, #9cb4d0 2px, #9cb4d0 3px, #c7ecfb 3px); }
.dock-lines + .dock-dots { width: 27px; height: 12px; background: repeating-conic-gradient(#37506c 0 25%, #dff3fb 0 50%) 0 0/4px 4px; flex: none; }
.dock-dots + .dock-lines { flex: 1; }
.dock-buttons { display: flex; gap: 5px; margin-left: 5px; width: 52px; overflow: hidden; }
.dock-buttons svg { background: #eee; width: 15px; height: 16px; border-right: 1px solid #777; border-bottom: 1px solid #777; }
.toolbars { height: 83px; padding-left: 3px; flex: none; border-bottom: 1px solid #aaa; }
.tool-row { display: flex; height: 40px; gap: 2px; }
.group { display: flex; align-items: center; border-right: 1.5px solid #858585; border-bottom: 1.5px solid #858585; border-top: 1px solid #fff; border-left: 1px solid #fff; padding-bottom: 3px; flex: none; }
.grip { width: 2px; height: 35px; border-right: 1px solid #888; border-bottom: 1px solid #888; margin-left: 3px; flex: none; background: #fff; }
.tool { flex: none; display: flex; align-items: center; justify-content: center; height: 20px; }
.tool svg { width: 20px; height: 20px; overflow: visible; }
.tool.box { height: 25px; margin-top: 4px; background: #f0f0f0; border: 1px solid #fff; border-right: 2px solid #888; border-bottom: 2px solid #888; }
.tool.box svg { width: 18px; height: 19px; }
.tool.on { background: #fff; border: 1px solid #999; border-right-color: #fff; border-bottom-color: #fff; }
.dots { border-left: 1px dotted #222; height: 22px; flex: none; width: 1px; }
.caret { border: 4px solid transparent; border-top: 5px solid #111; border-bottom: 0; width: 8px; height: 5px; flex: none; display: block; }
.field { background: #fff; border: 1px solid #777; border-right-color: #fff; border-bottom-color: #fff; height: 23px; flex: none; color: #222; font: 14.5px/23px "Liberation Mono", monospace; text-align: right; padding-right: 2px; margin-top: 2px; }
.spin { height: 24px; flex: none; display: flex; flex-direction: column; justify-content: space-around; align-items: center; border: 1px solid #fff; border-right: 2px solid #888; border-bottom: 1px solid #888; }
.spin i { border: 4px solid transparent; border-bottom: 6px solid #000; border-top: 0; }
.spin i + i { border-top: 6px solid #000; border-bottom: 0; }
.drop { height: 21px; border-right: 2px solid #888; border-bottom: 2px solid #888; background: #f4f4f4; display: flex; align-items: center; justify-content: center; flex: none; margin-top: 2px; }
.drop i { border: 8px solid transparent; border-top: 9px solid #000; border-bottom: 0; }
.label { flex: none; color: #222; font-size: 13.5px; margin-top: -2px; }

.panes { height: 728px; display: flex; flex: none; background: #fff; border-left: 3px solid #f0f0f0; color: #eee; font-size: 13px; }
.name-pane { width: 353px; border-right: 1px solid #999; }
.value-pane { width: 125px; margin-left: 3px; border-right: 1px solid #999; }
.wave-pane { width: 1401px; margin-left: 4px; position: relative; }
.side-pane { width: 16px; margin-left: 4px; flex: none; overflow: hidden; }
.pane-head { height: 25px; background: #808080; margin-bottom: 2px; display: flex; align-items: center; border-top: 1px solid #666; }
.names-head { padding-left: 12px; gap: 5px; }
.names-head .caret { margin-top: 6px; }
.value-head { justify-content: flex-end; padding-right: 7px; }
.wave-head { background: #000; }
.names, .values { height: 622px; background: #808080; margin-bottom: 3px; padding-top: 3px; overflow: hidden; }
.names { margin-left: 11px; }
.nrow { height: 21.25px; display: flex; align-items: center; }
.nrow svg { width: 50px; height: 21.25px; overflow: visible; }
.nrow span { padding-bottom: 2px; letter-spacing: var(--ls, 0); }
.nrow.child svg { width: 73px; }
.nrow.sel, .vrow.sel { background: #fff; color: #222; }
.vrow { height: 21.25px; line-height: 19px; padding-left: 2px; }
.foot-now { height: 28px; background: #808080; display: flex; align-items: center; justify-content: space-between; padding: 0 12px 1px 11px; }
.foot-cursor { height: 21px; background: #fff; color: #222; display: flex; align-items: center; justify-content: space-between; padding-right: 11px; }
.value-pane .foot-now, .value-pane .foot-cursor { justify-content: flex-end; }
.lock-box { background: #808080; width: 61px; height: 23px; padding: 2px 0 0 13px; }
.hscroll { margin-top: 4px; height: 22px; display: flex; border-top: 2px solid #8a8a8a; border-bottom: 2px solid #ddd; background: #f6f6f6; }
.hs-names { padding-left: 0; border-left: 10px solid #808080; }
.hscroll i { flex: 1; background: #f4f4f4; }
.hs-wave { margin-top: 5px; padding: 0 3px; }
.hs-wave i { background: #c5c5c5; }
.btn { width: 20px; display: flex; align-items: center; justify-content: center; background: #f3f3f3; border: 1px solid #fff; border-right: 2px solid #888; border-bottom: 2px solid #888; flex: none; }
.btn.lf::after { content: ""; border: 5px solid transparent; border-right: 6px solid #000; border-left: 0; }
.btn.rt::after { content: ""; border: 5px solid transparent; border-left: 6px solid #000; border-right: 0; }
.btn.off::after { border-left-color: #aaa; }
.btn.thumb { width: 10px; }
.hs-wave .btn { width: 17px; }
.hs-wave .btn.thumb { width: 10px; margin-left: 1px; }
.waves { background: #000; }
.timeline { background: #000; margin-top: 4px; }
.waves text { fill: #eee; font: 13px "DejaVu Sans Condensed", "DejaVu Sans", sans-serif; }
.timeline text { fill: #2bdc20; font: 13px "DejaVu Sans Condensed", "DejaVu Sans", sans-serif; }
.timeline .mark { fill: #d9b40c; }
.waves path { fill: none; stroke-width: 1.4; }
.bus { stroke: #8fcd92; }
.sig { stroke: #32bd22; }
.unk { stroke: #b81414; }
.cursor-line { position: absolute; left: 783.5px; top: 1px; width: 3px; height: 680px; background: linear-gradient(#efc10c 24px, transparent 24px, transparent 26px, #efc10c 26px, #efc10c 647px, transparent 647px, transparent 651px, #efc10c 651px); }
.side-top { height: 25px; background: #808080; margin-bottom: 3px; }
.vscroll { height: 619px; background: #c5c5c5; display: flex; flex-direction: column; width: 26px; margin-left: 1px; }
.vscroll i { height: 10px; }
.vscroll em { flex: 1; }
.vscroll .up { height: 19px; width: 17px; }
.vscroll .vthumb { height: 16px; width: 17px; }
.vscroll .dn { height: 19px; width: 17px; }
.btn.up::after { content: ""; border: 5px solid transparent; border-bottom: 5px solid #000; border-top: 0; }
.btn.dn::after { content: ""; border: 5px solid transparent; border-top: 6px solid #000; border-bottom: 0; }
.side-mid { margin-top: 6px; height: 49px; background: #808080; }
.side-low { margin-top: 4px; height: 23px; background: #808080; }
.statusbar { height: 27px; display: flex; flex: none; color: #222; margin-left: 2px; border-top: 2px solid #999; margin-top: 1px; }
.status-time { width: 212px; padding: 4px 0 0 7px; border-right: 1px solid #fff; border-left: 1px solid #999; }
.status-path { padding: 4px 0 0 8px; border-left: 1px solid #999; }

.shelf { height: 71px; background: linear-gradient(#044c54, #04585c 50%, #045c60); border-top: 1px solid #2b7078; display: flex; align-items: center; color: #e6f2f2; font: 16px "Open Sans", sans-serif; }
.download { width: 296px; height: 55px; border-right: 1px solid #4f8b90; display: flex; align-items: center; padding-left: 27px; }
.download + .download { width: 291px; padding-left: 22px; }
.file { width: 16px; height: 20px; margin-right: 18px; margin-top: -2px; }
.chev { width: 12px; height: 8px; fill: none; stroke: #fff; stroke-width: 2; margin-left: auto; margin-right: 23px; }
.show-all { margin-left: auto; width: 97px; height: 40px; border: 1px solid #1f4c58; border-radius: 3px; display: flex; align-items: center; justify-content: center; color: #8fc5e8; font-size: 15px; padding-bottom: 3px; }
.shelf-x { width: 12px; height: 12px; stroke: #fff; stroke-width: 2; margin: 0 17px 0 16px; }
.taskbar { height: 60px; background: #202020; display: flex; align-items: center; color: #f4f4f4; font: 15px "Open Sans", sans-serif; }
.taskbar span { display: block; line-height: 20px; width: max-content; }
.weather { width: 399px; padding-left: 26px; display: flex; gap: 10px; align-items: center; flex: none; }
.dim { color: #c4c4c4; }
.apps { display: flex; height: 60px; align-items: center; }
.app { height: 60px; display: flex; flex-direction: column; align-items: center; padding-top: 15px; width: 55px; flex: none; }
.app svg { width: 30px; height: 30px; overflow: visible; }
.app.run::after { content: ""; width: 8px; height: 4px; border-radius: 2px; background: #999; margin-top: 5px; }
.app.active { background: #2d2d2d; border-radius: 5px; width: 49px; height: 50px; padding-top: 10px; margin-left: 3px; border: 1px solid #383838; }
.app.active::after { width: 20px; background: #a8b3ad; }
.search { width: 125px; height: 40px; border-radius: 20px; background: #2d2d2d; border: 1px solid #363636; display: flex; align-items: center; gap: 6px; padding-left: 28px; margin: 0 4px 0 4px; flex: none; }
.search svg { width: 18px; height: 18px; }
.tray { margin-left: auto; display: flex; align-items: center; flex: none; }
.tray-chev { width: 16px; height: 9px; fill: none; stroke: #eee; stroke-width: 1.5; }
.sync { width: 22px; height: 22px; margin-left: 12px; }
.lang { width: 50px; margin-left: 7px; display: flex; flex-direction: column; align-items: center; }
.wifi { width: 21px; height: 18px; margin-left: 11px; }
.vol { width: 22px; height: 18px; margin-left: 9px; }
.batt { width: 22px; height: 18px; margin-left: 8px; }
.clock { width: 92px; display: flex; flex-direction: column; align-items: flex-end; }
.badge { width: 20px; height: 20px; border-radius: 50%; background: #9caaa2; color: #222; font-size: 13px; line-height: 20px; text-align: center; margin: 0 24px 0 9px; }
```
